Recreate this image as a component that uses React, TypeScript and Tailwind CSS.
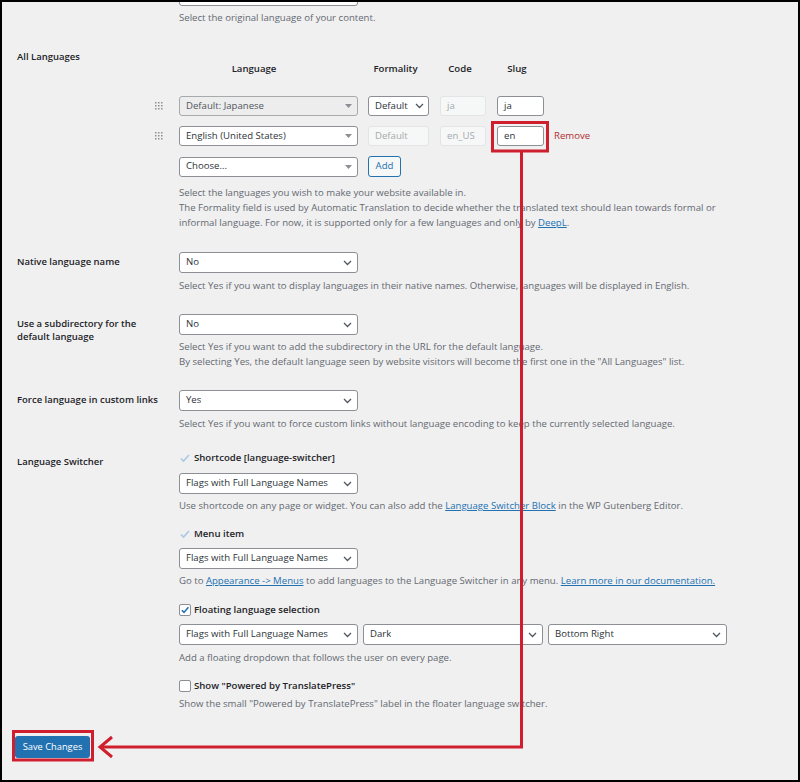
import React from 'react';

const Chevron = () => (
  <svg width="9" height="6" viewBox="0 0 9 6" className="shrink-0">
    <path d="M1 1l3.5 3.5L8 1" stroke="#50575e" strokeWidth="1.3" fill="none" />
  </svg>
);

const Triangle = () => (
  <svg width="7" height="4" viewBox="0 0 7 4" className="shrink-0">
    <path d="M0 0h7L3.5 4z" fill="#8c8f94" />
  </svg>
);

type SelectProps = {
  value: string;
  className?: string;
  triangle?: boolean;
  muted?: boolean;
};

const Select: React.FC<SelectProps> = ({ value, className = 'w-[179px] h-[21px]', triangle, muted }) => (
  <div
    className={`flex items-center justify-between rounded-[3px] border pl-[6px] pr-[5px] ${className} ${
      muted ? 'bg-[#ededed] border-[#a7aaad] text-[#50575e]' : 'bg-white border-[#8c8f94] text-[#2c3338]'
    }`}
  >
    <span className="truncate">{value}</span>
    {triangle ? <Triangle /> : <Chevron />}
  </div>
);

const Input: React.FC<{ value: string; disabled?: boolean; className?: string }> = ({ value, disabled, className = 'w-[47px]' }) => (
  <div
    className={`flex h-[20px] items-center rounded-[3px] border pl-[6px] ${className} ${
      disabled ? 'bg-[#f6f7f7] border-[#e2e4e7] text-[#a7aaad]' : 'bg-white border-[#8c8f94] text-[#2c3338]'
    }`}
  >
    {value}
  </div>
);

const Handle = () => (
  <svg width="8" height="8" viewBox="0 0 8 8" className="ml-[-24px] mr-[16px] shrink-0">
    {[0, 3, 6].map((y) =>
      [0, 3, 6].map((x) => <rect key={`${x}-${y}`} x={x} y={y} width="1.5" height="1.5" fill="#8c8f94" />)
    )}
  </svg>
);

const Desc: React.FC<{ children: React.ReactNode; className?: string }> = ({ children, className = 'mt-[4px]' }) => (
  <p className={`leading-[15px] text-[#646970] ${className}`}>{children}</p>
);

const A: React.FC<{ children: React.ReactNode }> = ({ children }) => (
  <span className="text-[#2271b1] underline">{children}</span>
);

const Label: React.FC<{ children: React.ReactNode; className?: string }> = ({ children, className = 'h-[21px] flex items-center' }) => (
  <div className={`text-[9.5px] font-semibold text-[#1d2327] ${className}`}>{children}</div>
);

const Check: React.FC<{ label: string; state: 'ghost' | 'on' | 'off'; className: string }> = ({ label, state, className }) => (
  <div className={`flex h-[14px] items-center ${className}`}>
    {state === 'ghost' ? (
      <svg width="12" height="12" viewBox="0 0 12 12" className="mr-[3px]">
        <path d="M2 6.5l2.5 2.5L10 3" stroke="#a9c8e6" strokeWidth="1.6" fill="none" />
      </svg>
    ) : (
      <div className="mr-[3px] flex h-[12px] w-[12px] items-center justify-center rounded-[2px] border border-[#8c8f94] bg-white">
        {state === 'on' && (
          <svg width="10" height="10" viewBox="0 0 10 10">
            <path d="M1.8 5.2l2.2 2.2L8.4 2.2" stroke="#2271b1" strokeWidth="1.6" fill="none" />
          </svg>
        )}
      </div>
    )}
    <span className="text-[9.6px] font-semibold text-[#1d2327]">{label}</span>
  </div>
);

export default function App() {
  return (
    <div className="relative h-[782px] w-[800px] overflow-hidden border-2 border-black bg-[#f0f0f1] font-['Open_Sans',sans-serif] text-[9.6px]">
      <div className="pl-[15px]">
        {/* Default language (cut off) */}
        <div className="mt-[-17px] grid grid-cols-[162px_1fr]">
          <Label>Default Language</Label>
          <div>
            <Select value="Japanese" />
            <Desc>Select the original language of your content.</Desc>
          </div>
        </div>

        {/* All languages */}
        <div className="mt-[25px] grid grid-cols-[162px_1fr]">
          <Label className="leading-[14px]">All Languages</Label>
          <div className="pt-[12px]">
            <div className="ml-[-29px] flex text-[9.6px] font-semibold leading-[14px] text-[#1d2327]">
              <span className="w-[208px] text-center">Language</span>
              <span className="ml-[4px] w-[67px] text-center">Formality</span>
              <span className="w-[62px] text-center">Code</span>
              <span className="w-[52px] text-center">Slug</span>
            </div>
            <div className="mt-[20px] flex flex-col gap-[10px]">
              <div className="flex items-center">
                <Handle />
                <Select value="Default: Japanese" className="w-[179px] h-[20px]" triangle muted />
                <div className="ml-[10px] flex h-[20px] w-[61px] items-center justify-between rounded-[3px] border border-[#8c8f94] bg-white pl-[6px] pr-[4px] text-[#2c3338]">
                  <span>Default</span>
                  <Chevron />
                </div>
                <Input value="ja" disabled className="ml-[11px] w-[46px]" />
                <Input value="ja" className="ml-[11px] w-[47px]" />
              </div>
              <div className="flex items-center">
                <Handle />
                <Select value="English (United States)" className="w-[179px] h-[20px]" triangle />
                <Input value="Default" disabled className="ml-[10px] w-[61px]" />
                <Input value="en_US" disabled className="ml-[11px] w-[46px]" />
                <Input value="en" className="ml-[11px] w-[47px]" />
                <span className="ml-[10px] text-[#b32d2e]">Remove</span>
              </div>
              <div className="flex items-center">
                <Select value="Choose..." className="w-[179px] h-[20px]" triangle />
                <div className="ml-[10px] flex h-[21px] w-[33px] items-center justify-center rounded-[3px] border border-[#2271b1] bg-[#f6f7f7] text-[#2271b1]">
                  Add
                </div>
              </div>
            </div>
            <Desc className="mt-[8px]">
              Select the languages you wish to make your website available in.
              <br />
              The Formality field is used by Automatic Translation to decide whether the translated text should lean towards formal or
              <br />
              informal language. For now, it is supported only for a few languages and only by <A>DeepL</A>.
            </Desc>
          </div>
        </div>

        {/* Native language name */}
        <div className="mt-[22px] grid grid-cols-[162px_1fr]">
          <Label>Native language name</Label>
          <div>
            <Select value="No" />
            <Desc className="mt-[5px]">
              Select Yes if you want to display languages in their native names. Otherwise, languages will be displayed in English.
            </Desc>
          </div>
        </div>

        {/* Subdirectory */}
        <div className="mt-[21px] grid grid-cols-[162px_1fr]">
          <Label className="pt-[3px] leading-[13px]">
            Use a subdirectory for the
            <br />
            default language
          </Label>
          <div>
            <Select value="No" />
            <Desc>
              Select Yes if you want to add the subdirectory in the URL for the default language.
              <br />
              By selecting Yes, the default language seen by website visitors will become the first one in the "All Languages" list.
            </Desc>
          </div>
        </div>

        {/* Force language */}
        <div className="mt-[21px] grid grid-cols-[162px_1fr]">
          <Label>Force language in custom links</Label>
          <div>
            <Select value="Yes" />
            <Desc className="mt-[5px]">
              Select Yes if you want to force custom links without language encoding to keep the currently selected language.
            </Desc>
          </div>
        </div>

        {/* Language switcher */}
        <div className="mt-[20px] grid grid-cols-[162px_1fr]">
          <Label className="pt-[4px] leading-[14px]">Language Switcher</Label>
          <div>
            <Check label="Shortcode [language-switcher]" state="ghost" className="" />
            <Select value="Flags with Full Language Names" className="mt-[8px] w-[179px] h-[21px]" />
            <Desc>
              Use shortcode on any page or widget. You can also add the <A>Language Switcher Block</A> in the WP Gutenberg Editor.
            </Desc>

            <Check label="Menu item" state="ghost" className="mt-[14px]" />
            <Select value="Flags with Full Language Names" className="mt-[7px] w-[179px] h-[21px]" />
            <Desc>
              Go to <A>Appearance -&gt; Menus</A> to add languages to the Language Switcher in any menu.{' '}
              <A>Learn more in our documentation.</A>
            </Desc>

            <Check label="Floating language selection" state="on" className="mt-[15px]" />
            <div className="mt-[7px] flex gap-[5px]">
              <Select value="Flags with Full Language Names" />
              <Select value="Dark" className="w-[180px] h-[21px]" />
              <Select value="Bottom Right" />
            </div>
            <Desc className="mt-[5px]">Add a floating dropdown that follows the user on every page.</Desc>

            <Check label={'Show "Powered by TranslatePress"'} state="off" className="mt-[14px]" />
            <Desc className="mt-[3px]">Show the small "Powered by TranslatePress" label in the floater language switcher.</Desc>
          </div>
        </div>

        <button className="mt-[25px] ml-[-2px] flex h-[22px] w-[75px] items-center justify-center rounded-[3px] bg-[#2271b1] text-[9.3px] text-white">
          Save Changes
        </button>
      </div>

      {/* annotation */}
      <svg className="pointer-events-none absolute left-[-2px] top-[-2px]" width="800" height="782" viewBox="0 0 800 782">
        <g stroke="#cf1f2e" strokeWidth="3" fill="none">
          <rect x="492.5" y="122.5" width="55" height="28.5" />
          <path d="M521.5 152V747H100" />
          <path d="M112 737L100 747L112 757" />
          <rect x="13.5" y="731.5" width="79" height="28.5" />
        </g>
      </svg>
    </div>
  );
}
